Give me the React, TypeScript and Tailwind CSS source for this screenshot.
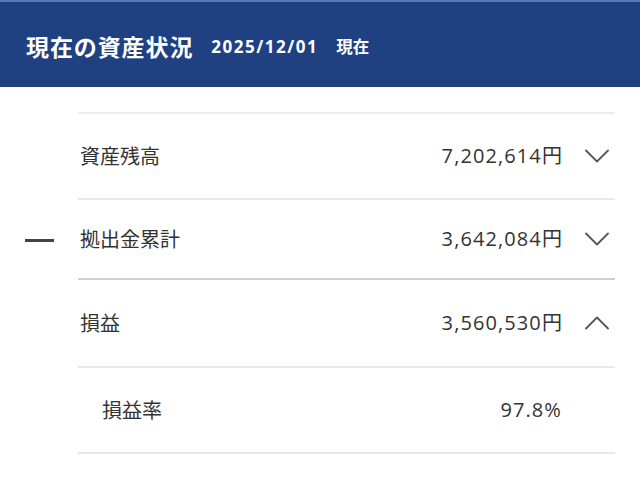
import React from 'react';

type Row = {
  label: string;
  value: string;
  height: string;
  border: string;
  chevron?: 'down' | 'up';
  minus?: boolean;
  indent?: boolean;
};

const rows: Row[] = [
  { label: '資産残高', value: '7,202,614円', height: 'h-[86px]', border: 'border-[#e8e8e8]', chevron: 'down' },
  { label: '拠出金累計', value: '3,642,084円', height: 'h-[80px]', border: 'border-[#cfcfcf]', chevron: 'down', minus: true },
  { label: '損益', value: '3,560,530円', height: 'h-[88px]', border: 'border-[#e8e8e8]', chevron: 'up' },
  { label: '損益率', value: '97.8%', height: 'h-[86px]', border: 'border-[#e8e8e8]', indent: true },
];

function Chevron({ dir }: { dir: 'down' | 'up' }) {
  return (
    <svg width="24" height="14" viewBox="0 0 24 14" fill="none" className="shrink-0">
      <path
        d={dir === 'down' ? 'M1 1.5 L12 12.5 L23 1.5' : 'M1 12.5 L12 1.5 L23 12.5'}
        stroke="#555"
        strokeWidth="1.8"
        strokeLinecap="round"
        strokeLinejoin="round"
      />
    </svg>
  );
}

export default function App() {
  return (
    <div className="w-[640px] h-[481px] overflow-hidden bg-white font-['Noto_Sans_CJK_JP',sans-serif]">
      {/* Header */}
      <div className="h-[87px] bg-[#1f4181] border-t-2 border-[#5a79b0] flex items-center pl-[26px] pt-[4px] text-white">
        <span className="text-[23px] font-bold tracking-[0.9px]">現在の資産状況</span>
        <span className="ml-[18px] text-[17px] font-bold tracking-[1.5px] font-['Open_Sans','Noto_Sans_CJK_JP',sans-serif]">
          2025/12/01
        </span>
        <span className="ml-[18px] text-[16.5px] font-bold">現在</span>
      </div>

      {/* List */}
      <div className="pt-[25px]">
        <div className="ml-[78px] mr-[25px] border-t-2 border-[#ececec]" />
        {rows.map((row) => (
          <div key={row.label} className="flex">
            <div className="w-[78px] shrink-0 flex items-center">
              {row.minus && <div className="ml-[25px] w-[29px] h-[3px] bg-[#444]" />}
            </div>
            <div
              className={`flex-1 mr-[25px] flex items-center border-b-2 ${row.height} ${row.border} ${
                row.indent ? 'pl-[24px] pr-[53px]' : 'pl-[2px] pr-[6px]'
              }`}
            >
              <span className="flex-1 text-[20px] text-[#333]">{row.label}</span>
              <span className="text-[20px] text-[#333] tracking-[1.1px] font-['Open_Sans','Noto_Sans_CJK_JP',sans-serif]">
                {row.value}
              </span>
              {row.chevron && (
                <span className="ml-[22px] flex items-center">
                  <Chevron dir={row.chevron} />
                </span>
              )}
            </div>
          </div>
        ))}
      </div>
    </div>
  );
}
